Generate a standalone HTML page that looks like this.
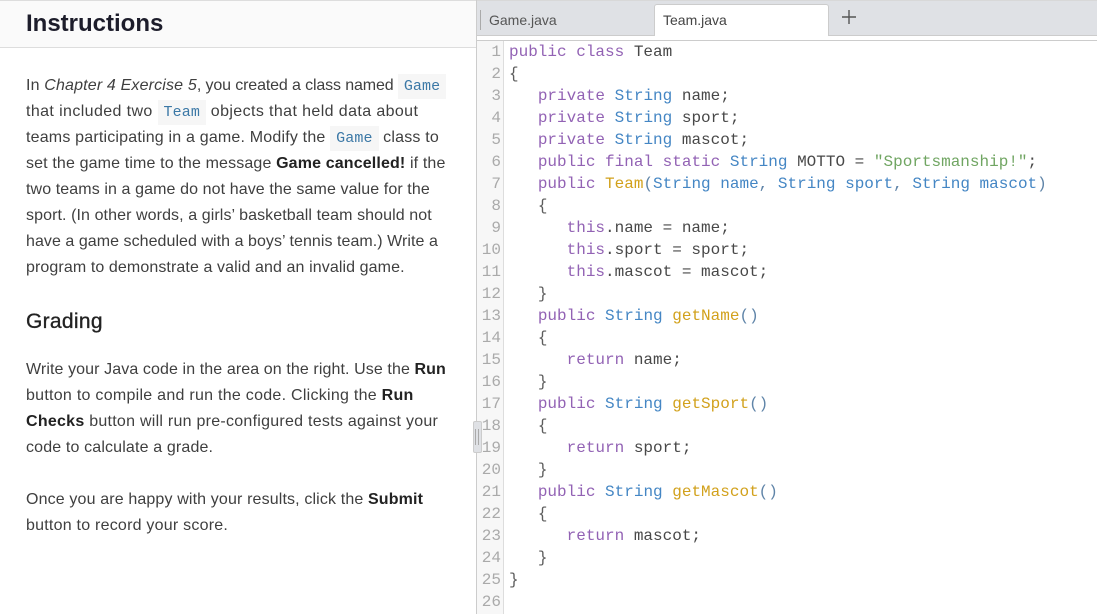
<!DOCTYPE html>
<html><head><meta charset="utf-8"><style>
html,body{margin:0;padding:0;width:1097px;height:614px;overflow:hidden;background:#fff}
div{position:absolute;box-sizing:border-box}
.t{left:26px;height:26px;font:16px/26px "Liberation Sans",sans-serif;color:#3f3f3f;white-space:nowrap}
.t b{color:#222}
.t code{font:15px "Liberation Mono",monospace;color:#3b78a6;background:#f6f6f6;padding:4px 6px;letter-spacing:.1px}
.h{left:26px;font-family:"Liberation Sans",sans-serif;color:#222;white-space:nowrap}
.n{left:477px;width:24px;height:22px;text-align:right;font:16px/22px "Liberation Mono",monospace;color:#aaa}
.c{left:509px;height:22px;font:16px/22px "Liberation Mono",monospace;color:#484848;white-space:pre}
.k{color:#9262b4}.y{color:#4486c4}.f{color:#d2a11c}.s{color:#70a562}.b{color:#5c5c5c}.p{color:#5f84a8}
</style></head><body>
<div style="left:0;top:0;width:476px;height:48px;background:#fafafa;border-top:1px solid #ddd;border-bottom:1px solid #ddd"></div>
<div class="h" style="top:9px;font-size:24px;line-height:30px;font-weight:bold;color:#1d1d2b">Instructions</div>
<div class="t" style="top:73px"><span style="letter-spacing:.16px">In <i>Chapter 4 Exercise 5</i></span><span style="letter-spacing:-.13px">, you created a class named </span><code>Game</code></div>
<div class="t" style="top:99px;letter-spacing:.39px">that included two <code>Team</code> objects that held data about</div>
<div class="t" style="top:125px;letter-spacing:.19px">teams participating in a game. Modify the <code>Game</code> class to</div>
<div class="t" style="top:151px;letter-spacing:.14px">set the game time to the message <b>Game cancelled!</b> if the</div>
<div class="t" style="top:177px;letter-spacing:.1px">two teams in a game do not have the same value for the</div>
<div class="t" style="top:203px;letter-spacing:.09px">sport. (In other words, a girls’ basketball team should not</div>
<div class="t" style="top:229px;letter-spacing:.05px">have a game scheduled with a boys’ tennis team.) Write a</div>
<div class="t" style="top:255px;letter-spacing:.1px">program to demonstrate a valid and an invalid game.</div>
<div class="h" style="top:308px;font-size:21px;line-height:28px;color:#222;letter-spacing:.3px;-webkit-text-stroke:.3px #222">Grading</div>
<div class="t" style="top:357px;letter-spacing:.1px">Write your Java code in the area on the right. Use the <b>Run</b></div>
<div class="t" style="top:383px;letter-spacing:.27px">button to compile and run the code. Clicking the <b>Run</b></div>
<div class="t" style="top:409px;letter-spacing:.26px"><b>Checks</b> button will run pre-configured tests against your</div>
<div class="t" style="top:435px;letter-spacing:.15px">code to calculate a grade.</div>
<div class="t" style="top:487px;letter-spacing:.14px">Once you are happy with your results, click the <b>Submit</b></div>
<div class="t" style="top:513px;letter-spacing:.23px">button to record your score.</div>

<div style="left:476px;top:0;width:621px;height:35px;background:#dfe1e5;border-top:1px solid #d8d8d8"></div>
<div style="left:476px;top:35px;width:621px;height:1px;background:#ccc"></div>
<div style="left:476px;top:40px;width:621px;height:1px;background:#ccc"></div>
<div style="left:480px;top:10px;width:1px;height:20px;background:#aaa"></div>
<div style="left:489px;top:10px;font:14px/20px 'Liberation Sans',sans-serif;color:#555">Game.java</div>
<div style="left:654px;top:4px;width:175px;height:32px;background:#fff;border:1px solid #ccc;border-bottom:none;border-radius:3px 3px 0 0"></div>
<div style="left:663px;top:10px;font:14px/20px 'Liberation Sans',sans-serif;color:#444">Team.java</div>
<svg style="position:absolute;left:842px;top:10px" width="14" height="14"><path d="M0 7H14M7 0V14" stroke="#555" stroke-width="1.4" fill="none"/></svg>

<div style="left:476px;top:0;width:1px;height:614px;background:#ccc"></div>
<div style="left:477px;top:41px;width:27px;height:573px;background:#f7f7f7;border-right:1px solid #ddd"></div>
<div style="left:473px;top:421px;width:9px;height:32px;background:#dfe1e5;border:1px solid #ccc;border-radius:2px"></div>
<div style="left:475px;top:429px;width:4px;height:16px;border-left:1px solid #aaa;border-right:1px solid #aaa"></div>

<div class="n" style="top:41px">1</div><div class="n" style="top:63px">2</div><div class="n" style="top:85px">3</div><div class="n" style="top:107px">4</div><div class="n" style="top:129px">5</div><div class="n" style="top:151px">6</div><div class="n" style="top:173px">7</div><div class="n" style="top:195px">8</div><div class="n" style="top:217px">9</div><div class="n" style="top:239px">10</div><div class="n" style="top:261px">11</div><div class="n" style="top:283px">12</div><div class="n" style="top:305px">13</div><div class="n" style="top:327px">14</div><div class="n" style="top:349px">15</div><div class="n" style="top:371px">16</div><div class="n" style="top:393px">17</div><div class="n" style="top:415px">18</div><div class="n" style="top:437px">19</div><div class="n" style="top:459px">20</div><div class="n" style="top:481px">21</div><div class="n" style="top:503px">22</div><div class="n" style="top:525px">23</div><div class="n" style="top:547px">24</div><div class="n" style="top:569px">25</div><div class="n" style="top:591px">26</div>

<div class="c" style="top:41px"><span class="k">public class</span> Team</div>
<div class="c" style="top:63px"><span class="b">{</span></div>
<div class="c" style="top:85px">   <span class="k">private</span> <span class="y">String</span> name;</div>
<div class="c" style="top:107px">   <span class="k">private</span> <span class="y">String</span> sport;</div>
<div class="c" style="top:129px">   <span class="k">private</span> <span class="y">String</span> mascot;</div>
<div class="c" style="top:151px">   <span class="k">public final static</span> <span class="y">String</span> MOTTO = <span class="s">"Sportsmanship!"</span>;</div>
<div class="c" style="top:173px">   <span class="k">public</span> <span class="f">Team</span><span class="p">(</span><span class="y">String name</span><span class="p">,</span> <span class="y">String sport</span><span class="p">,</span> <span class="y">String mascot</span><span class="p">)</span></div>
<div class="c" style="top:195px">   <span class="b">{</span></div>
<div class="c" style="top:217px">      <span class="k">this</span>.name = name;</div>
<div class="c" style="top:239px">      <span class="k">this</span>.sport = sport;</div>
<div class="c" style="top:261px">      <span class="k">this</span>.mascot = mascot;</div>
<div class="c" style="top:283px">   <span class="b">}</span></div>
<div class="c" style="top:305px">   <span class="k">public</span> <span class="y">String</span> <span class="f">getName</span><span class="p">()</span></div>
<div class="c" style="top:327px">   <span class="b">{</span></div>
<div class="c" style="top:349px">      <span class="k">return</span> name;</div>
<div class="c" style="top:371px">   <span class="b">}</span></div>
<div class="c" style="top:393px">   <span class="k">public</span> <span class="y">String</span> <span class="f">getSport</span><span class="p">()</span></div>
<div class="c" style="top:415px">   <span class="b">{</span></div>
<div class="c" style="top:437px">      <span class="k">return</span> sport;</div>
<div class="c" style="top:459px">   <span class="b">}</span></div>
<div class="c" style="top:481px">   <span class="k">public</span> <span class="y">String</span> <span class="f">getMascot</span><span class="p">()</span></div>
<div class="c" style="top:503px">   <span class="b">{</span></div>
<div class="c" style="top:525px">      <span class="k">return</span> mascot;</div>
<div class="c" style="top:547px">   <span class="b">}</span></div>
<div class="c" style="top:569px"><span class="b">}</span></div>
</body></html>
